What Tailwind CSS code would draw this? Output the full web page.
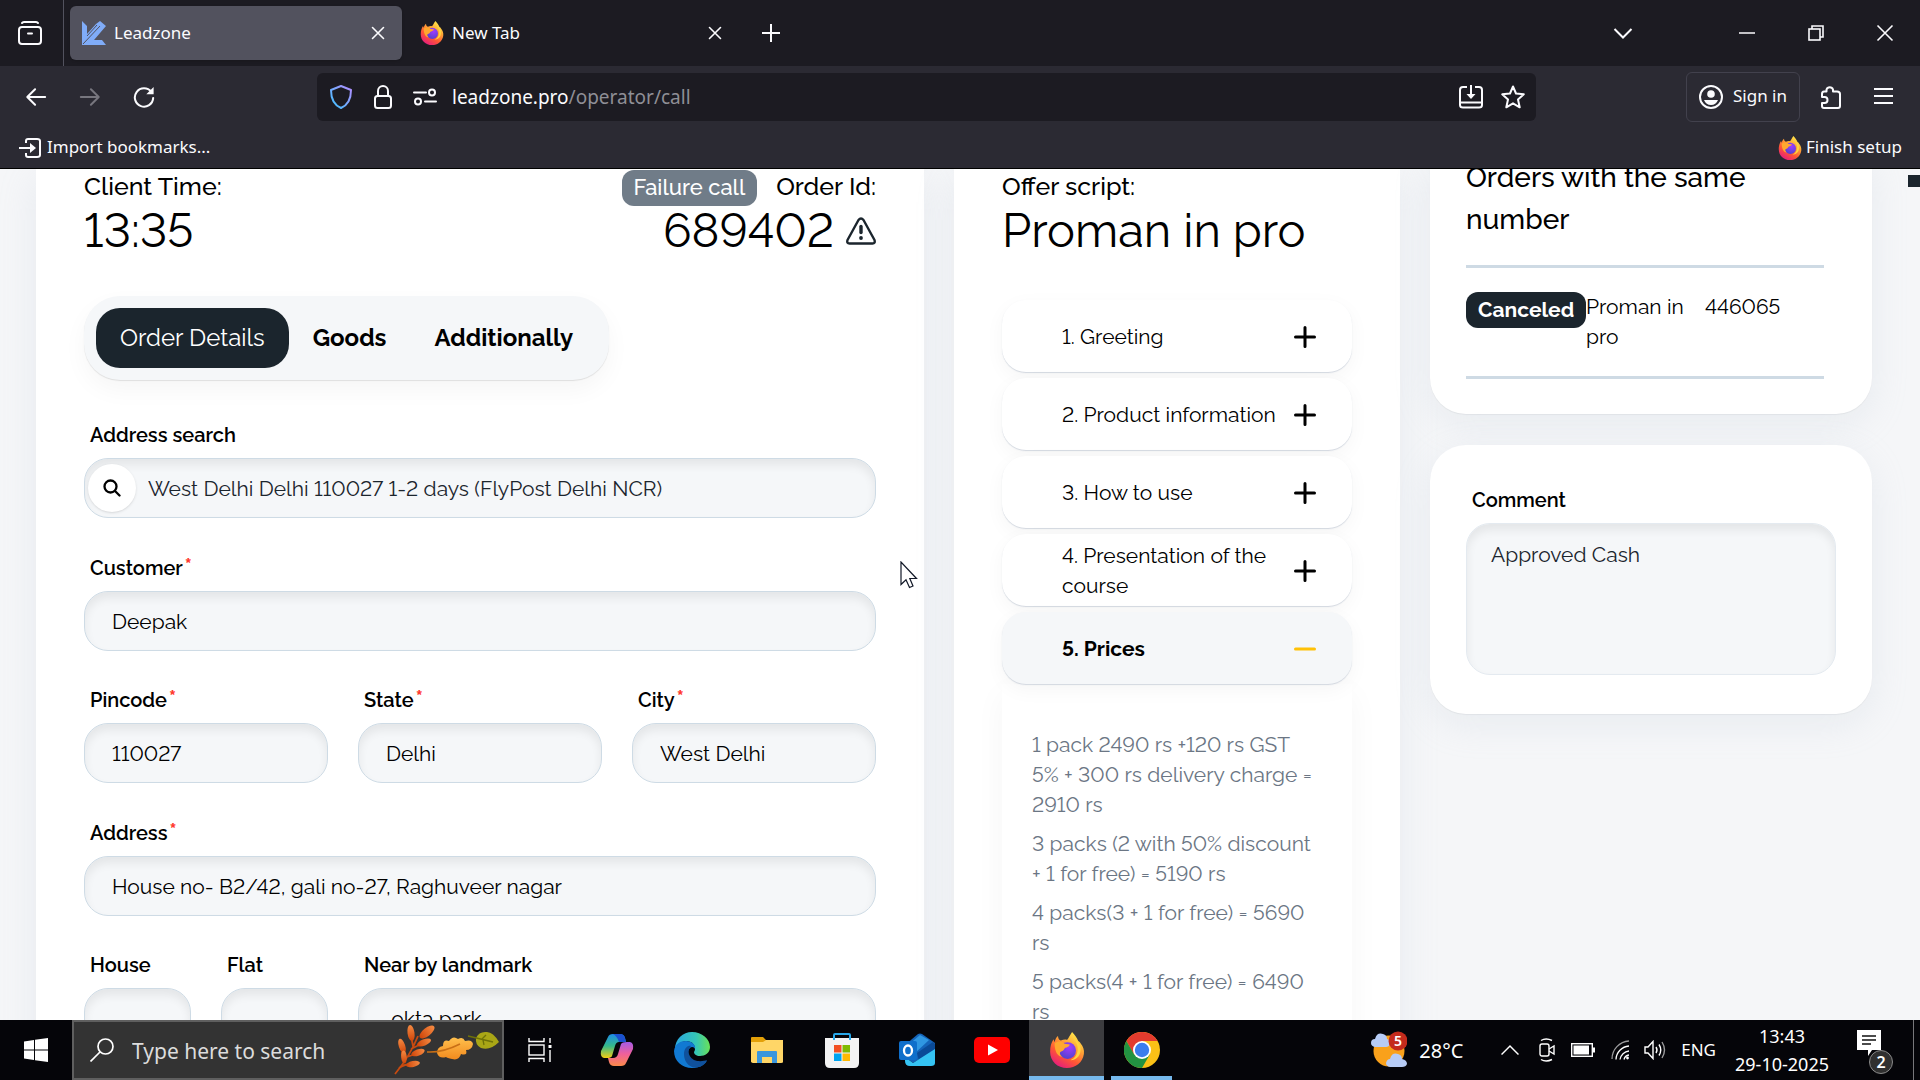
<!DOCTYPE html>
<html lang="en">
	<head>
		<meta charset="utf-8">
		<meta name="viewport" content="width=device-width, initial-scale=1">
		<title>Leadzone</title>
		<script src="https://cdn.jsdelivr.net/npm/@tailwindcss/browser@4"></script>
	</head>
	<body class="h-screen flex flex-col overflow-hidden bg-[#f5f6f8] text-black lining-nums font-['Raleway','Open_Sans',sans-serif]">
		<!-- shared icons -->
		<svg class="absolute size-0">
			<defs>
				<linearGradient id="fx_body" x1="0.8" y1="0" x2="0.2" y2="1">
					<stop offset="0" stop-color="#fff44f"/>
					<stop offset="0.35" stop-color="#ffa436"/>
					<stop offset="0.65" stop-color="#ff5634"/>
					<stop offset="1" stop-color="#e31587"/>
				</linearGradient>
				<radialGradient id="fx_globe" cx="0.6" cy="0.3" r="0.8">
					<stop offset="0" stop-color="#a23bff"/>
					<stop offset="1" stop-color="#4a44c8"/>
				</radialGradient>
				<symbol id="firefox" viewBox="0 0 32 32">
					<path fill="url(#fx_body)" d="M20.500 0C23 3 25 5 26 8C27 8.500 27.500 9 28 10C30.500 13 31.500 16 31 19.500C30 27 23.500 32 16 32C7.500 32 1 26 1 17.500C1 13 2 9.500 4 6.500L5 9C5.500 6.500 6.500 4.500 8 3.500C8 5.500 9 7 10.500 7.500C13 6.500 15 6.500 16 7C17.500 5.500 18.500 3 20.500 0Z"/>
					<circle cx="16.500" cy="16.500" r="7.500" fill="url(#fx_globe)"/>
					<path fill="#ffa82e" d="M5 10C8 7.500 12 8 14 10.500L18.500 11C18 13 16 13.500 14.500 14C13 15 13.500 16.500 11.500 17C9 17.500 9 20 12 22C8 22 5 18 5 10Z"/>
					<path fill="#ffd43e" d="M20 2C21 6 26 9 25.500 16C25 21 22 24 19 25C25 25 29 20 28 13C26.500 8 22 6 20 2Z"/>
				</symbol>
				<symbol id="plus" viewBox="0 0 22 22">
					<path d="M11 1.500V20.500M1.500 11H20.500" stroke="currentColor" stroke-width="3" stroke-linecap="round"/>
				</symbol>
				<symbol id="close" viewBox="0 0 16 16">
					<path d="M2.500 2.500L13.500 13.500M13.500 2.500L2.500 13.500" stroke="currentColor" stroke-width="1.600" stroke-linecap="round"/>
				</symbol>
				<symbol id="arrow" viewBox="0 0 24 24">
					<path d="M22 12H3M11 3.500L2.500 12L11 20.500" fill="none" stroke="currentColor" stroke-width="2.200" stroke-linecap="round" stroke-linejoin="round"/>
				</symbol>
			</defs>
		</svg>

		<!-- browser window -->
		<header class="shrink-0 bg-[#2b2a33] border-b border-black text-[#fbfbfe] text-lg font-['Segoe_UI','Noto_Sans',sans-serif]">
			<div class="h-[66px] bg-[#1c1b22] flex items-center">
				<button aria-label="Tabs" class="w-16 h-full border-r border-[#52525e] flex items-center justify-center pr-1">
					<svg class="size-6" viewBox="0 0 24 24" fill="none" stroke="currentColor" stroke-width="2"><rect x="1" y="6" width="22" height="17" rx="3"/><path d="M4 2Q4.500 1 6 1H18Q19.500 1 20 2M10 12.500H14" stroke-linecap="round"/></svg>
				</button>
				<div class="ml-1.5 w-[332px] h-[54px] rounded-md bg-[#52525e] flex items-center pl-3 pr-4 shadow">
					<svg class="size-6" viewBox="0 0 24 24" fill="#80acf8"><path d="M0 0L5 5V13L14 3L18 0L24 5L12 19H20L24 24H0Z"/><path d="M1 23L18 5M5 15L15 4" stroke="#52525e" fill="none"/></svg>
					<span class="ml-2 flex-1 pt-px text-[17px]">Leadzone</span>
					<button aria-label="Close Leadzone"><svg class="size-4"><use href="#close"/></svg></button>
				</div>
				<div class="w-[341px] flex items-center pl-[18px] pr-5">
					<svg class="size-6"><use href="#firefox"/></svg>
					<span class="ml-2 flex-1 pt-px text-[17px]">New Tab</span>
					<button aria-label="Close New Tab"><svg class="size-4"><use href="#close"/></svg></button>
				</div>
				<button aria-label="Open a new tab" class="ml-[18px]"><svg class="size-5" viewBox="0 0 20 20" stroke="currentColor" stroke-width="2"><path d="M10 1V19M1 10H19"/></svg></button>
				<div class="ml-auto flex items-center pr-[26px]">
					<button aria-label="List tabs" class="mr-[106px]"><svg class="w-5 h-4" viewBox="0 0 20 16" fill="none" stroke="currentColor" stroke-width="2"><path d="M1.500 4L10 12.500L18.500 4"/></svg></button>
					<button aria-label="Minimize" class="mr-[53px]"><svg class="size-4" viewBox="0 0 16 16" stroke="currentColor" stroke-width="1.500"><path d="M0 8H16"/></svg></button>
					<button aria-label="Restore" class="mr-[52px]"><svg class="size-4" viewBox="0 0 16 16" fill="none" stroke="currentColor" stroke-width="1.600"><rect x="1" y="4" width="11" height="11"/><path d="M4 4V1H15V12H12"/></svg></button>
					<button aria-label="Close window"><svg class="size-[18px]" viewBox="0 0 18 18" stroke="currentColor" stroke-width="1.600"><path d="M1.500 1.500L16.500 16.500M16.500 1.500L1.500 16.500"/></svg></button>
				</div>
			</div>
			<div class="h-[60px] flex items-center pt-px">
				<div class="w-[317px] flex items-center gap-8 pl-[25px]">
					<button aria-label="Back"><svg class="size-[22px]"><use href="#arrow"/></svg></button>
					<button aria-label="Forward" class="text-[#77767e] rotate-180"><svg class="size-[22px]"><use href="#arrow"/></svg></button>
					<button aria-label="Reload"><svg class="size-[22px]" viewBox="0 0 24 24" fill="none" stroke="currentColor" stroke-width="2.200"><path d="M20 6.500A10 10 0 1 0 22 13" stroke-linecap="round"/><path d="M22.500 1V9H14.500Z" fill="currentColor" stroke="none"/></svg></button>
				</div>
				<div class="w-[1219px] h-12 rounded-md bg-[#1c1b22] flex items-center pl-3 pr-[11px] mr-auto">
					<svg class="size-6 mr-[18px]" viewBox="0 0 24 24" fill="none"><path d="M12 1L22 5C22 14 19 20 12 23C5 20 2 14 2 5Z" stroke="url(#shield)" stroke-width="2" stroke-linejoin="round"/><defs><linearGradient id="shield" x1="1" y1="0" x2="0" y2="1"><stop stop-color="#b48cff"/><stop offset="1" stop-color="#3cc4ff"/></linearGradient></defs></svg>
					<svg class="size-6 mr-[18px]" viewBox="0 0 24 24" fill="none" stroke="currentColor" stroke-width="2"><rect x="4" y="11" width="16" height="12" rx="2.500"/><path d="M7 11V6A5 5 0 0 1 17 6V11"/></svg>
					<svg class="size-6 mr-[15px]" viewBox="0 0 24 24" fill="none" stroke="currentColor" stroke-width="2"><path d="M1 7.500H13M12 16.500H23" stroke-linecap="round"/><circle cx="19" cy="7.500" r="3"/><circle cx="5" cy="16.500" r="3"/></svg>
					<p class="flex-1 pt-0.5 text-[19px]">leadzone.pro<span class="text-[#8f8f96]">/operator/call</span></p>
					<svg class="size-6 mr-[18px]" viewBox="0 0 24 24" fill="none" stroke="currentColor" stroke-width="2"><path d="M8 2H4Q1 2 1 5V20Q1 22.500 4 22.500H20Q23 22.500 23 20V5Q23 2 20 2H16M1 17.500H23M12 0V12"/><path d="M7.500 9H16.500L12 14Z" fill="currentColor" stroke="none"/></svg>
					<svg class="size-6" viewBox="0 0 24 24" fill="none" stroke="currentColor" stroke-width="2" stroke-linejoin="round"><path d="M12 1.500L15 8.500L22.800 9.300L17 14.500L18.700 22.300L12 18.300L5.300 22.300L7 14.500L1.200 9.300L9 8.500Z"/></svg>
				</div>
				<button class="h-[50px] w-[114px] rounded-md border border-[#42414d] flex items-center justify-center gap-2.5 text-[17px] whitespace-nowrap">
					<svg class="size-6 shrink-0" viewBox="0 0 24 24"><circle cx="12" cy="12" r="11" fill="none" stroke="currentColor" stroke-width="2"/><circle cx="12" cy="9" r="3.800" fill="currentColor"/><path d="M5 15H19Q17 20 12 20Q7 20 5 15Z" fill="currentColor"/></svg>
					Sign in
				</button>
				<button aria-label="Extensions" class="ml-[19px]"><svg class="size-6" viewBox="0 0 24 24" fill="none" stroke="currentColor" stroke-width="2" stroke-linejoin="round"><path d="M3 9Q3 6.500 5 6.500H7.500V4.500A3.500 3.500 0 0 1 14 4.500V6.500H18Q21 6.500 21 9V21Q21 23 19 23H5Q3 23 3 21V18H5.500A3 3 0 0 0 5.500 12H3Z"/></svg></button>
				<button aria-label="Menu" class="ml-[31px] mr-[27px]"><svg class="w-[19px] h-6" viewBox="0 0 19 24" stroke="currentColor" stroke-width="1.800"><path d="M0 4H19M0 11H19M0 18H19"/></svg></button>
			</div>
			<div class="h-[42px] flex items-center justify-between pl-[19px] pr-[18px] pt-px text-[17px]">
				<button class="flex items-center gap-1.5">
					<svg class="size-[22px]" viewBox="0 0 22 22" fill="none" stroke="currentColor" stroke-width="2"><path d="M7 6V4Q7 2 9 2H18Q21 2 21 4V18Q21 20 18 20H9Q7 20 7 18V16M0 11H14"/><path d="M11 6L17 11L11 16Z" fill="currentColor" stroke="none"/></svg>
					Import bookmarks...
				</button>
				<button class="flex items-center gap-1">
					<svg class="size-6"><use href="#firefox"/></svg>
					Finish setup
				</button>
			</div>
		</header>

		<main class="relative flex-1 min-h-0 overflow-hidden grid grid-cols-[888fr_446fr_442fr] gap-[30px] pl-9 pr-12">
			<!-- order -->
			<section class="bg-white h-[1100px] px-12 shadow-[0_10px_36px_rgba(180,195,210,0.2)]">
				<div class="flex justify-between">
					<div>
						<p class="text-[25px] leading-[34px] font-medium">Client Time:</p>
						<p class="text-[47px] leading-[56px]">13:35</p>
					</div>
					<div class="flex flex-col items-end">
						<div class="h-[34px] flex items-start gap-[19px]">
							<span class="mt-px h-9 px-3 rounded-xl bg-[#707c88] text-white text-[22px] leading-[34px] font-medium">Failure call</span>
							<p class="text-[25px] leading-[34px] font-medium">Order Id:</p>
						</div>
						<div class="flex items-center gap-3">
							<p class="text-[47px] leading-[56px]">689402</p>
							<svg class="w-[30px] h-7" viewBox="0 0 30 28" fill="none" stroke="#1b252d" stroke-width="2.400" stroke-linejoin="round"><path d="M12.500 3Q15 0 17.500 3L28.500 23Q29.500 26.500 26.500 26.500H3.500Q0.500 26.500 1.500 23Z"/><path d="M15 9.500V15.500" stroke-width="3.400" stroke-linecap="round"/><circle cx="15" cy="21" r="1.900" fill="#1b252d" stroke="none"/></svg>
						</div>
					</div>
				</div>

				<div class="mt-[37px] w-fit p-3 rounded-[36px] bg-[#f5f7f9] flex text-[24px] font-bold shadow-[0_1px_1px_rgba(0,0,0,0.1),0_10px_24px_rgba(0,0,0,0.04)]">
					<button class="h-[60px] px-6 rounded-[24px] bg-[#1b252d] text-white font-normal">Order Details</button>
					<button class="h-[60px] px-6">Goods</button>
					<button class="h-[60px] px-6">Additionally</button>
				</div>

				<form class="mt-[38px] flex flex-col gap-[26px] text-[21px] [&_label]:block [&_label]:pl-1.5 [&_label]:h-10 [&_label]:pt-0.5 [&_label]:leading-[30px] [&_label]:text-[20px] [&_label]:font-semibold [&_sup]:text-[#ff3b30] [&_sup]:pl-0.5 [&_sup]:text-[20px] [&_sup]:font-extrabold [&_sup]:leading-none [&_sup]:-top-0.5 [&_input]:w-full [&_input]:h-[60px] [&_input]:px-[27px] [&_input]:rounded-[24px] [&_input]:border [&_input]:border-[#cedbe5] [&_input]:bg-[#f5f7f9] [&_input]:shadow-[inset_0_6px_10px_rgba(0,0,0,0.07)]">
					<div class="h-[107px]">
						<label for="search">Address search</label>
						<div class="relative">
							<input id="search" class="pl-[63px]! text-[#1b252d]" value="West Delhi Delhi 110027 1-2 days (FlyPost Delhi NCR)">
							<span class="absolute left-1 top-1.5 size-12 rounded-full bg-white shadow-sm flex items-center justify-center">
								<svg class="size-[18px]" viewBox="0 0 18 18" fill="none" stroke="#000" stroke-width="2.300" stroke-linecap="round"><circle cx="7.500" cy="7.500" r="6"/><path d="M12 12L16.500 16.500"/></svg>
							</span>
						</div>
					</div>
					<div class="h-[106px]">
						<label for="customer">Customer<sup>*</sup></label>
						<input id="customer" value="Deepak">
					</div>
					<div class="h-[107px] grid grid-cols-3 gap-[30px]">
						<div><label for="pincode">Pincode<sup>*</sup></label><input id="pincode" value="110027"></div>
						<div><label for="state">State<sup>*</sup></label><input id="state" value="Delhi"></div>
						<div><label for="city">City<sup>*</sup></label><input id="city" value="West Delhi"></div>
					</div>
					<div class="h-[106px]">
						<label for="address">Address<sup>*</sup></label>
						<input id="address" value="House no- B2/42, gali no-27, Raghuveer nagar">
					</div>
					<div class="h-[106px] grid grid-cols-3 gap-[30px]">
						<div class="grid grid-cols-2 gap-[30px]">
							<div><label for="house">House</label><input id="house"></div>
							<div><label for="flat">Flat</label><input id="flat"></div>
						</div>
						<div class="col-span-2"><label for="landmark">Near by landmark</label><input id="landmark" value=" okta park"></div>
					</div>
				</form>
			</section>

			<!-- script -->
			<section class="bg-white h-[1100px] px-12 shadow-[0_10px_36px_rgba(180,195,210,0.2)]">
				<p class="text-[25px] leading-[34px] font-medium">Offer script:</p>
				<h1 class="text-[47px] leading-[56px]">Proman in pro</h1>
				<div class="mt-[41px] flex flex-col gap-1.5 text-[21px] leading-[30px] text-left [&_button]:h-[72px] [&_button]:pl-[60px] [&_button]:pr-9 [&_button]:pt-px [&_button]:rounded-[24px] [&_button]:flex [&_button]:items-center [&_button]:justify-between [&_button]:text-left [&_button]:shadow-[0_1px_1px_rgba(100,120,150,0.25),0_6px_20px_rgba(0,0,0,0.04)] [&_svg]:shrink-0 [&_svg]:size-[22px]">
					<button class="bg-white">1. Greeting<svg><use href="#plus"/></svg></button>
					<button class="bg-white">2. Product information<svg><use href="#plus"/></svg></button>
					<button class="bg-white">3. How to use<svg><use href="#plus"/></svg></button>
					<button class="bg-white">4. Presentation of the course<svg><use href="#plus"/></svg></button>
					<button class="bg-[#f5f7f9] font-bold">5. Prices<svg viewBox="0 0 22 22"><path d="M1.500 11H20.500" stroke="#ffc107" stroke-width="3" stroke-linecap="round"/></svg></button>
				</div>
				<div class="h-[400px] pt-[46px] pl-[30px] pr-9 flex flex-col gap-[9px] text-[21px] leading-[30px] text-[#6b7684] shadow-[0_10px_30px_rgba(0,0,0,0.04)]">
					<p>1 pack 2490 rs +120 rs GST 5% + 300 rs delivery charge = 2910 rs</p>
					<p>3 packs (2 with 50% discount + 1 for free) = 5190 rs</p>
					<p>4 packs(3 + 1 for free) = 5690 rs</p>
					<p>5 packs(4 + 1 for free) = 6490 rs</p>
				</div>
			</section>

			<!-- other orders -->
			<aside class="-mt-3 flex flex-col gap-[31px]">
				<section class="bg-white rounded-b-[36px] pl-9 pr-12 pb-[35px] shadow-[0_1px_1px_rgba(0,0,0,0.05),0_10px_36px_rgba(180,195,210,0.2)]">
					<h2 class="text-[28px] leading-[42px] font-medium">Orders with the same number</h2>
					<div class="mt-6 h-[114px] border-y-3 border-[#cedae4] pt-6 flex text-[21px] leading-[30px]">
						<span class="w-[120px] shrink-0"><span class="block w-fit h-9 px-3 rounded-xl bg-[#1b252d] text-white font-bold leading-9">Canceled</span></span>
						<span class="w-[119px] shrink-0">Proman in pro</span>
						<span>446065</span>
					</div>
				</section>
				<section class="bg-white rounded-[36px] px-9 pt-10 pb-[39px] shadow-[0_1px_1px_rgba(0,0,0,0.05),0_10px_36px_rgba(180,195,210,0.2)]">
					<label for="comment" class="block pl-1.5 h-[38px] text-[20px] leading-[30px] font-semibold">Comment</label>
					<textarea id="comment" class="block w-full h-[152px] resize-none rounded-[24px] border border-[#e4eaf0] bg-[#f5f7f9] px-6 py-4 text-[21px] leading-[30px] text-[#1b252d] shadow-[inset_0_6px_10px_rgba(0,0,0,0.07)]">Approved Cash</textarea>
				</section>
			</aside>

			<div class="absolute right-0 top-[6px] w-3 h-3 bg-[#1b252d]"></div>
			<!-- mouse pointer -->
			<svg class="absolute left-[900px] top-[392px] w-[18px] h-7" viewBox="0 0 18 28" fill="#fff" stroke="#111827" stroke-width="1.200"><path d="M1 1V23.500L6 18.800L9.500 26.500L13 25L9.800 17.500H16.500Z"/></svg>
		</main>

		<!-- taskbar -->
		<footer class="shrink-0 h-[60px] bg-[#050509] text-white flex items-center font-['Segoe_UI','Noto_Sans',sans-serif]">
			<button aria-label="Start" class="w-[72px] flex justify-center"><svg class="size-6" viewBox="0 0 24 24" fill="#fff"><path d="M0 3.500L10 2V11.500H0ZM11 1.800L24 0V11.500H11ZM0 12.500H10V22L0 20.500ZM11 12.500H24V24L11 22.200Z"/></svg></button>
			<label class="w-[432px] h-full bg-[#333] border-2 border-[#5f5f5f] flex items-center pl-4">
				<svg class="size-6 shrink-0" viewBox="0 0 24 24" fill="none" stroke="#fff" stroke-width="1.700"><circle cx="15.500" cy="8.500" r="7.500"/><path d="M10 14L0.500 23.500"/></svg>
				<input aria-label="Search" placeholder="Type here to search" class="ml-[18px] w-[262px] pt-1 text-[21px] placeholder:text-[#dcdcdc]">
				<svg class="w-[105px] h-[52px] shrink-0" viewBox="0 0 105 52">
					<defs>
						<linearGradient id="berry" x1="0" y1="0" x2="0" y2="1"><stop stop-color="#f58a42"/><stop offset="1" stop-color="#cf4509"/></linearGradient>
						<linearGradient id="oak" x1="0" y1="0" x2="0" y2="1"><stop stop-color="#ffc04d"/><stop offset="1" stop-color="#f28a1e"/></linearGradient>
					</defs>
					<path d="M1 50Q16 32 24 12M5 44Q10 40 19 40M10 37Q8 34 8 28M13 33L24 29M17 25L27 20M19 22L17 12" stroke="#c64a10" stroke-width="1.800" fill="none"/>
					<g fill="url(#berry)">
						<ellipse cx="17" cy="9" rx="3.500" ry="8" transform="rotate(-8 17 9)"/>
						<ellipse cx="33" cy="8" rx="4" ry="9" transform="rotate(52 33 8)"/>
						<ellipse cx="8" cy="22" rx="3.200" ry="7.500" transform="rotate(-18 8 22)"/>
						<ellipse cx="30" cy="18.500" rx="3.200" ry="7.500" transform="rotate(68 30 18.500)"/>
						<ellipse cx="10" cy="33" rx="2.800" ry="6.500" transform="rotate(-4 10 33)"/>
						<ellipse cx="24" cy="28.500" rx="3.200" ry="7" transform="rotate(70 24 28.500)"/>
						<ellipse cx="19" cy="40" rx="3" ry="7" transform="rotate(78 19 40)"/>
					</g>
					<path d="M43 29Q43 23 49 22Q49 15 55 17Q59 11 64 15Q69 12 71 17Q78 15 79 20Q78 26 72 26Q74 32 67 30Q65 37 58 35Q53 34 52 33Q45 35 43 29Z" fill="url(#oak)"/><path d="M33 28Q48 29 66 20" stroke="#c86f16" stroke-width="1.500" fill="none"/>
					<path d="M74 12L82 14Q85 7 93 8Q99 8 105 18Q96 27 87 24Q81 21 82 14" fill="#a9a616"/><path d="M74 12L99 18M88 15L92 11M89 16L90 21" stroke="#6f7208" stroke-width="1.300" fill="none"/>
				</svg>
			</label>
			<button aria-label="Task view" class="w-[75px] pr-1 flex justify-center"><svg class="size-6" viewBox="0 0 24 24" fill="none" stroke="#fff" stroke-width="1.400"><path d="M1 0V3.500H16V0M1 24V20.500H16V24M22 0V5M22 12V24"/><rect x="1" y="7" width="15" height="10"/><path d="M20.500 7H23.500V10H20.500Z" fill="#fff" stroke="none"/></svg></button>

			<div class="flex h-full [&>button]:w-[75px] [&>button]:h-full [&>button]:flex [&>button]:items-center [&>button]:justify-center">
				<button aria-label="Copilot">
					<svg class="w-[34px] h-8" viewBox="0 0 34 32">
						<defs>
							<linearGradient id="cop_a" x1="0" y1="0" x2="0" y2="1"><stop stop-color="#1e8de8"/><stop offset="0.5" stop-color="#35b98a"/><stop offset="1" stop-color="#f5cc13"/></linearGradient>
							<linearGradient id="cop_b" x1="0" y1="0" x2="0" y2="1"><stop stop-color="#a45be8"/><stop offset="0.5" stop-color="#f0609a"/><stop offset="1" stop-color="#fb8a4a"/></linearGradient>
						</defs>
						<path d="M8 3Q9 0 13 0H20Q24 0 25 4L26 8H19Q16 8 15 12L12 22Q11 24 7 24H4Q0 23 1 17Z" fill="url(#cop_a)"/>
						<path d="M26 29Q25 32 21 32H14Q10 32 9 28L8 24H13Q17 24 18 20L21 10Q22 8 27 8H30Q34 9 33 15Z" fill="url(#cop_b)"/>
						<path d="M13 0H20Q24 0 25 4L26 8H19Q17 2 13 0Z" fill="#1b50cf"/>
					</svg>
				</button>
				<button aria-label="Edge">
					<svg class="size-9" viewBox="0 0 36 36">
						<defs>
							<linearGradient id="edge_a"><stop stop-color="#2aa7e0"/><stop offset="0.6" stop-color="#35c6b8"/><stop offset="1" stop-color="#69e158"/></linearGradient>
						</defs>
						<path d="M1 17C1 7 9 0 18 0C28 0 36 7 36 15C36 21 31 24 26 24C22 24 20 22 20 20C22 18 22 10 13 9C7 9 2 13 1 17Z" fill="url(#edge_a)"/>
						<path d="M0 19C1 12 6 9 12 9C18 9 22 13 21 17C20 14 15 14 14 20C14 27 19 31 25 31C29 31 32 30 33 29C29 34 24 36 18 36C8 36 0 29 0 19Z" fill="#1179d2"/>
						<path d="M10 22C10 15 15 13 17 14C13 18 14 25 20 28C25 30 30 29 33 28C31 34 23 37 18 35C13 33 10 28 10 22Z" fill="#10519c"/>
					</svg>
				</button>
				<button aria-label="File Explorer">
					<svg class="w-8 h-[26px]" viewBox="0 0 32 26"><path d="M0 1Q0 0 1 0H12L15 3H31Q32 3 32 5V25H0Z" fill="#e3a008"/><path d="M0 5H12L15 3H32V25Q32 26 30 26H2Q0 26 0 24Z" fill="#ffd667"/><path d="M6 26V15Q6 14 7 14H25Q26 14 26 15V26H21V20H11V26Z" fill="#3a96dd"/></svg>
				</button>
				<button aria-label="Store">
					<svg class="w-[34px] h-9" viewBox="0 0 34 36"><path d="M9 8V3Q9 2 10 2H24Q25 2 25 3V8" fill="none" stroke="#28a8ea" stroke-width="2"/><path d="M0 6H34V31Q34 36 29 36H5Q0 36 0 31Z" fill="#f3f3f3"/><path d="M9 6V8M25 6V8" stroke="#28a8ea" stroke-width="2"/><path d="M9 13H16.500V20.500H9Z" fill="#f25022"/><path d="M17.500 13H25V20.500H17.500Z" fill="#7fba00"/><path d="M9 21.500H16.500V29H9Z" fill="#00a4ef"/><path d="M17.500 21.500H25V29H17.500Z" fill="#ffb900"/></svg>
				</button>
				<button aria-label="Outlook">
					<svg class="w-9 h-[34px]" viewBox="0 0 36 34"><path d="M6 12L19 1Q21 0 23 1L36 10V17L14 30L6 24Z" fill="#1463b8"/><path d="M8 13L21 2L30 7L14 22Z" fill="#2f97e2"/><path d="M18 20L34 9L36 11V18L20 28Z" fill="#0a4a97"/><path d="M6 24L14 30L36 16V30Q36 33 32 33H11Q6 33 6 28Z" fill="#35c3f3"/><rect y="8" width="18" height="19" rx="2" fill="#0f6fcb"/><ellipse cx="9" cy="17.500" rx="4" ry="5" fill="none" stroke="#fff" stroke-width="2.300"/></svg>
				</button>
				<button aria-label="YouTube">
					<svg class="w-9 h-[26px]" viewBox="0 0 36 26"><rect width="36" height="26" rx="5" fill="#f00"/><path d="M14 7.500L24 13L14 18.500Z" fill="#fff"/></svg>
				</button>
				<button aria-label="Firefox" class="bg-[#3c3c3f] border-b-4 border-[#76b9ed] pt-1">
					<svg class="size-9"><use href="#firefox"/></svg>
				</button>
				<button aria-label="Chrome" class="relative">
					<svg class="size-9" viewBox="0 0 36 36"><circle cx="18" cy="18" r="18" fill="#fbc116"/><path d="M2.400 9A18 18 0 0 1 33.600 9H18L10 22.500Z" fill="#e33b2e"/><path d="M2.400 9A18 18 0 0 0 18 36L25.800 22.500L10.200 22.500Z" fill="#229342"/><circle cx="18" cy="18" r="9" fill="#fff"/><circle cx="18" cy="18" r="7.200" fill="#3b7ded"/></svg>
					<span class="absolute bottom-0 inset-x-[7px] h-1 bg-[#76b9ed]"></span>
				</button>
			</div>

			<div class="ml-auto h-full flex items-center text-[17px] [&_svg]:shrink-0">
				<svg class="w-9 h-[38px]" viewBox="0 0 36 38"><circle cx="18" cy="20" r="15.500" fill="#f9a11b"/><path d="M4 16Q0 15 0 12Q0 8 4 8Q6 1 12 3Q16 4 16 8Q20 9 19 13Q18 16 15 16Z" fill="#b7ccf6"/><path d="M19 36Q15 35 15 32Q16 28 19 28Q21 21 27 23Q31 24 31 28Q36 29 36 33Q35 36 31 36Z" fill="#b7ccf6"/><circle cx="27" cy="10" r="9.500" fill="#c42b1c"/><text x="27" y="15" text-anchor="middle" font-size="14" font-weight="600" fill="#fff">5</text></svg>
				<span class="ml-3 w-[82px] pt-0.5 text-xl">28°C</span>
				<svg class="w-[18px] h-3" viewBox="0 0 18 12" fill="none" stroke="#fff" stroke-width="1.500"><path d="M0.500 10.500L9 2L17.500 10.500"/></svg>
				<svg class="ml-5 w-4 h-6" viewBox="0 0 16 24" fill="none" stroke="#fff" stroke-width="1.400"><rect x="1" y="6" width="9" height="12" rx="2"/><path d="M10 11L15 8V16L10 13M2 2.500Q7 -0.500 13 2.500M2 21.500Q7 24.500 13 21.500"/></svg>
				<svg class="ml-4 w-6 h-[14px]" viewBox="0 0 24 14"><rect x="0.700" y="0.700" width="20.600" height="12.600" fill="none" stroke="#fff" stroke-width="1.400"/><path d="M2.500 2.500H18V11.500H2.500ZM22 4.500H24V9.500H22Z" fill="#fff"/></svg>
				<svg class="ml-4 w-[18px] h-5" viewBox="0 0 18 20" fill="none" stroke="#fff" stroke-width="1.300"><path d="M1 19A18 18 0 0 1 18 1" opacity="0.600"/><path d="M5 19.500A14 14 0 0 1 18 6M9 19.500A10 10 0 0 1 18 11M13 19.500A6 6 0 0 1 18 15"/><circle cx="16.500" cy="18" r="1.400" fill="#fff" stroke="none"/></svg>
				<svg class="ml-[15px] w-[22px] h-5" viewBox="0 0 22 20" fill="none" stroke="#fff" stroke-width="1.400"><path d="M1 7H4L9 1.500V18.500L4 13H1Z"/><path d="M12 7Q14 10 12 13M15 4.500Q18.500 10 15 15.500"/><path d="M18 2Q23 10 18 18" opacity="0.600"/></svg>
				<span class="ml-[15px]">ENG</span>
				<div class="ml-4 w-[100px] text-center text-[18px] leading-7 whitespace-nowrap"><p>13:43</p><p>29-10-2025</p></div>
				<div class="ml-[25px] relative w-9 h-10">
					<svg class="w-6 h-[26px]" viewBox="0 0 24 26"><path d="M0 0H24V20H15L11 26V20H0Z" fill="#fff"/><path d="M5 6H19M5 10H19M5 14H14" stroke="#111" stroke-width="1.400"/></svg>
					<span class="absolute right-0 -bottom-1 size-6 rounded-full border border-[#8a8a8a] bg-[#303030] text-center text-base leading-[22px] font-semibold">2</span>
				</div>
				<div class="ml-5 mr-[6px] w-px h-full bg-[#77777a]"></div>
			</div>
		</footer>
	</body>
</html>
